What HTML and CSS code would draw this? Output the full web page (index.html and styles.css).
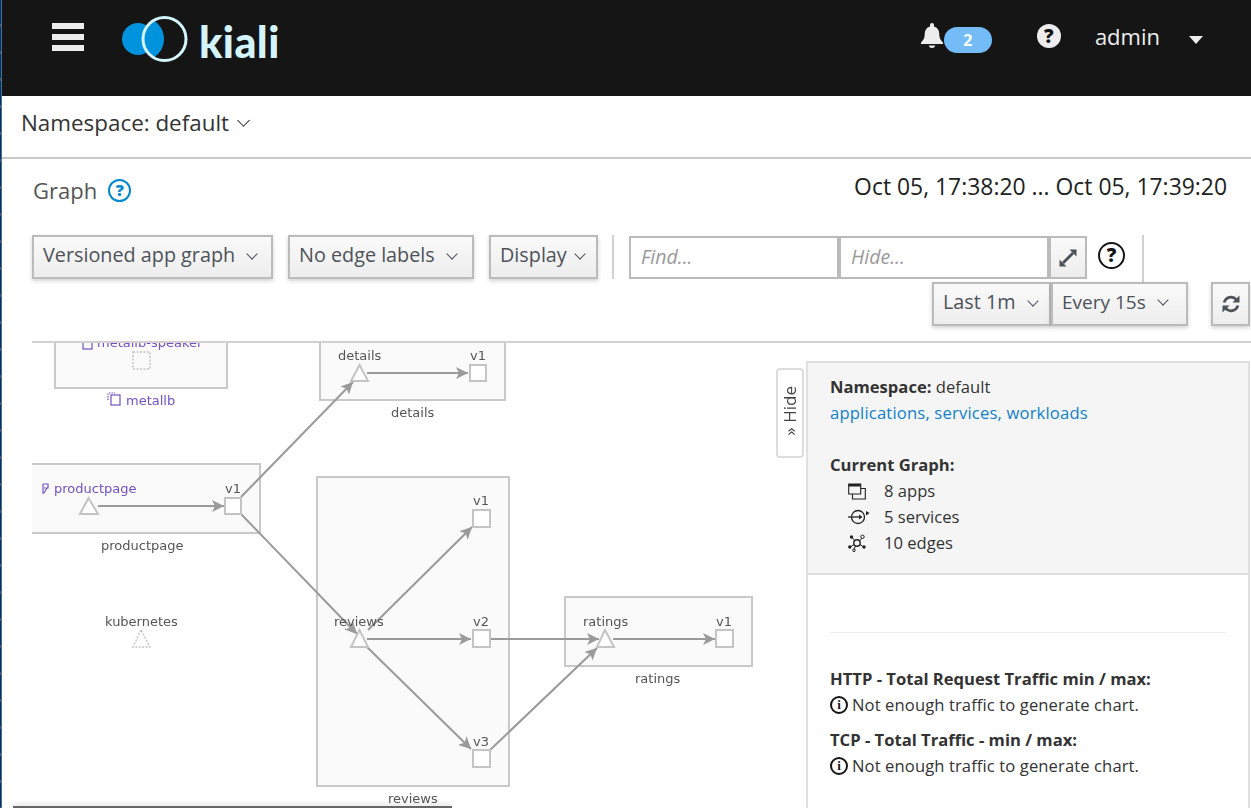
FILE: index.html
```html
<!DOCTYPE html>
<html lang="en">
<head>
  <meta charset="UTF-8" />
  <meta name="viewport" content="width=device-width, initial-scale=1.0"/>
  <title>Kiali</title>
  <link rel="stylesheet" href="styles.css">
</head>
<body>
  <div class="page">
    <header class="topbar">
      <svg class="menu-icon" width="32" height="28" viewBox="0 0 32 28">
        <rect x="0" y="0" width="32" height="6" />
        <rect x="0" y="11" width="32" height="6" />
        <rect x="0" y="22" width="32" height="6" />
      </svg>
      <svg class="logo-mark" width="68" height="46" viewBox="122 16 68 46">
        <defs>
          <clipPath id="ringClip"><circle cx="164.5" cy="39" r="22" /></clipPath>
        </defs>
        <circle cx="138" cy="39" r="16" fill="#0093dd" />
        <circle cx="142" cy="39" r="22" fill="#0093dd" clip-path="url(#ringClip)" />
        <circle cx="164.5" cy="39" r="21.5" fill="none" stroke="#d4f4fb" stroke-width="3" />
      </svg>
      <span class="logo-text">kiali</span>

      <div class="topbar-right">
        <svg class="bell" width="24" height="26" viewBox="0 0 24 26">
          <path d="M12 0a2 2 0 0 0-2 2v1.400C6.500 4.400 4.700 7.300 4.700 11c0 4.500-1.700 6.500-3.700 8.400V21h22v-1.600c-2-1.900-3.700-3.900-3.700-8.400 0-3.700-1.800-6.600-5.300-7.600V2a2 2 0 0 0-2-2z" />
          <path d="M8.700 22.500a3.400 3.400 0 0 0 6.600 0z" />
        </svg>
        <span class="badge">2</span>
        <span class="help-solid">?</span>
        <span class="user">admin</span>
        <span class="user-caret"></span>
      </div>
    </header>

    <div class="ns-bar">
      <span>Namespace: default</span>
      <span class="chevron chevron-lg"></span>
    </div>

    <div class="title-row">
      <div class="title">
        <span>Graph</span>
        <span class="help-blue">?</span>
      </div>
      <div class="range">Oct 05, 17:38:20 ... Oct 05, 17:39:20</div>
    </div>

    <div class="toolbar">
      <div class="toolbar-row">
        <button class="btn btn-graph">Versioned app graph <span class="chevron"></span></button>
        <button class="btn btn-edge">No edge labels <span class="chevron"></span></button>
        <button class="btn btn-display">Display <span class="chevron"></span></button>
        <div class="divider"></div>
        <div class="find-group">
          <input class="find-input" type="text" placeholder="Find..." />
          <input class="find-input" type="text" placeholder="Hide..." />
          <button class="btn btn-expand">
            <svg width="20" height="20" viewBox="0 0 20 20">
              <path d="M5 15 15 5" stroke="#4d5258" stroke-width="2.800" fill="none" />
              <path d="M11.500 1.500h7v7zM1.500 11.500v7h7z" fill="#4d5258" />
            </svg>
          </button>
        </div>
        <span class="help-ring">?</span>
        <div class="divider divider-tall"></div>
      </div>
      <div class="toolbar-row toolbar-row-end">
        <button class="btn btn-last">Last 1m <span class="chevron"></span></button>
        <button class="btn btn-every">Every 15s <span class="chevron"></span></button>
        <button class="btn btn-refresh">
          <svg width="20" height="20" viewBox="0 0 20 20">
            <path d="M3.200 8.500A7 7 0 0 1 15.300 5.600" stroke="#4d5258" stroke-width="2.800" fill="none" />
            <path d="M18.500 1.500v7h-7z" fill="#4d5258" />
            <path d="M16.800 11.500A7 7 0 0 1 4.700 14.400" stroke="#4d5258" stroke-width="2.800" fill="none" />
            <path d="M1.500 18.500v-7h7z" fill="#4d5258" />
          </svg>
        </button>
      </div>
    </div>

    <div class="graph-area">
      <svg class="graph" width="774" height="465" viewBox="32 343 774 465">
        <defs>
          <marker id="vee" markerWidth="14" markerHeight="12" refX="12" refY="6" orient="auto" markerUnits="userSpaceOnUse">
            <path d="M0 0 12 6 0 12 3 6z" fill="#9a9a9a" />
          </marker>
        </defs>

        <g class="boxes">
          <rect x="55" y="320" width="172" height="68" />
          <rect x="320" y="330" width="185" height="70" />
          <rect x="10" y="464" width="250" height="69" />
          <rect x="317" y="477" width="192" height="309" />
          <rect x="565" y="597" width="187" height="69" />
        </g>

        <g class="edges">
          <line x1="98" y1="506" x2="224" y2="506" marker-end="url(#vee)" />
          <line x1="241" y1="497" x2="353" y2="382" marker-end="url(#vee)" />
          <line x1="241" y1="514" x2="357" y2="634" marker-end="url(#vee)" />
          <line x1="367" y1="373" x2="468" y2="373" marker-end="url(#vee)" />
          <line x1="368" y1="630" x2="472" y2="527" marker-end="url(#vee)" />
          <line x1="367" y1="639" x2="471" y2="639" marker-end="url(#vee)" />
          <line x1="367" y1="647" x2="471" y2="749" marker-end="url(#vee)" />
          <line x1="490" y1="639" x2="599" y2="639" marker-end="url(#vee)" />
          <line x1="490" y1="750" x2="597" y2="648" marker-end="url(#vee)" />
          <line x1="613" y1="639" x2="715" y2="639" marker-end="url(#vee)" />
        </g>

        <g class="nodes">
          <rect class="dotted" x="133" y="352" width="17" height="17" />
          <polygon class="dotted" points="141,630 133,647 150,647" />
          <polygon points="88.500,498 80,514 98,514" />
          <rect x="225" y="498" width="16" height="16" />
          <polygon points="359.500,365 351,381 368,381" />
          <rect x="470" y="365" width="16" height="16" />
          <rect x="473" y="510" width="17" height="17" />
          <polygon points="359.500,630 351,647 368,647" />
          <rect x="473" y="630" width="17" height="17" />
          <rect x="473" y="750" width="17" height="17" />
          <polygon points="605,630 597,647 614,647" />
          <rect x="716" y="630" width="17" height="17" />
        </g>

        <g class="labels">
          <text class="purple" x="97" y="347">metallb-speaker</text>
          <text class="purple" x="126" y="405">metallb</text>
          <text class="purple" x="54" y="493">productpage</text>
          <text x="225" y="493">v1</text>
          <text x="101" y="550">productpage</text>
          <text x="338" y="360">details</text>
          <text x="470" y="360">v1</text>
          <text x="391" y="417">details</text>
          <text x="473" y="505">v1</text>
          <text x="334" y="626">reviews</text>
          <text x="473" y="626">v2</text>
          <text x="473" y="746">v3</text>
          <text x="388" y="803">reviews</text>
          <text x="583" y="626">ratings</text>
          <text x="716" y="626">v1</text>
          <text x="635" y="683">ratings</text>
          <text x="105" y="626">kubernetes</text>
        </g>

        <g class="purple-icons">
          <rect x="111" y="395" width="9" height="10" />
          <path d="M108 400v-6h1.500M109 393h6" stroke-dasharray="1.500 1" />
          <rect x="83" y="339" width="9" height="10" />
          <path d="M43 484v10M43 484h5v4h-4M47 488l-3 5" />
        </g>
      </svg>

      <aside class="side">
        <button class="hide-tab"><span class="hide-text">» Hide</span></button>
        <div class="panel">
          <div class="panel-top">
            <div><b>Namespace:</b> default</div>
            <div class="links">applications, services, workloads</div>
            <div class="spacer"></div>
            <div><b>Current Graph:</b></div>
            <div class="stat">
              <svg width="18" height="18" viewBox="0 0 18 18">
                <path d="M.700 2h12v10H.700z" fill="none" stroke="#222" stroke-width="1.100" />
                <path d="M.700 2h12v2.500H.700z" fill="#222" />
                <path d="M12.700 6.500h4.600v10.500H4.500v-5" fill="none" stroke="#222" stroke-width="1.100" />
              </svg>
              <span>8 apps</span>
            </div>
            <div class="stat">
              <svg class="stat-wide" width="22" height="18" viewBox="0 0 22 18">
                <circle cx="10" cy="9" r="6.500" fill="none" stroke="#222" stroke-width="1.300" />
                <path d="M0 9h12" stroke="#222" stroke-width="1.300" />
                <path d="M11 6.500 14.500 9 11 11.500zM18 3l3.500 2-3.500 2.500z" fill="#222" />
              </svg>
              <span>5 services</span>
            </div>
            <div class="stat">
              <svg width="18" height="18" viewBox="0 0 18 18">
                <circle cx="9" cy="9" r="3.200" fill="none" stroke="#222" stroke-width="1.400" />
                <path d="M6.700 6.700 4 3.500M11.500 7 14 4M7.500 12 6 15.500M12 10.500l3 2M6 10.500l-3 2" stroke="#222" />
                <circle cx="3.500" cy="3" r="1.700" fill="#222" />
                <circle cx="14.500" cy="2.800" r="1.700" fill="none" stroke="#222" />
                <circle cx="1.800" cy="13" r="1.700" fill="#222" />
                <circle cx="16" cy="13" r="1.700" fill="#222" />
                <circle cx="6" cy="16.300" r="1.300" fill="none" stroke="#222" />
              </svg>
              <span>10 edges</span>
            </div>
          </div>
          <div class="panel-body">
            <hr class="rule" />
            <div><b>HTTP - Total Request Traffic min / max:</b></div>
            <div class="chart-note"><span class="info">i</span>Not enough traffic to generate chart.</div>
            <div class="chart-title-next"><b>TCP - Total Traffic - min / max:</b></div>
            <div class="chart-note"><span class="info">i</span>Not enough traffic to generate chart.</div>
          </div>
        </div>
      </aside>
    </div>
  </div>
  <div class="window-edge"></div>
</body>
</html>
```

FILE: styles.css
```css
html, body {
  margin: 0;
  height: 100%;
  overflow: hidden;
}

body {
  position: relative;
  padding-left: 2px;
  box-sizing: border-box;
  font-family: 'Open Sans', sans-serif;
  color: #333;
  background:
    linear-gradient(to right, transparent 1px, #1f78c1 1px),
    repeating-linear-gradient(#2a2a2a 0 24px, #7a4a3a 24px 27px);
}

.page {
  height: 100%;
  display: flex;
  flex-direction: column;
  background-color: #fff;
}

/* top bar */
.topbar {
  height: 96px;
  flex: none;
  display: flex;
  align-items: flex-start;
  background-color: #151515;
  color: #ededed;
}

.menu-icon {
  margin: 23px 0 0 50px;
  fill: #ededed;
}

.logo-mark {
  margin: 16px 0 0 38px;
}

.logo-text {
  margin: 14px 0 0 9px;
  font-family: 'Lato', sans-serif;
  font-weight: 900;
  font-size: 43px;
  line-height: 56px;
  letter-spacing: 0.4px;
  color: #d4f4fb;
}

.topbar-right {
  margin-left: auto;
  display: flex;
  align-items: flex-start;
}

.bell {
  margin-top: 23px;
  fill: #ededed;
}

.badge {
  width: 48px;
  height: 26px;
  margin-top: 27px;
  border-radius: 13px;
  background-color: #73bcf7;
  color: #fff;
  font-weight: 700;
  font-size: 16px;
  line-height: 26px;
  text-align: center;
}

.help-solid {
  width: 24px;
  height: 24px;
  margin: 24px 0 0 45px;
  border-radius: 50%;
  background-color: #ededed;
  color: #151515;
  font-weight: 800;
  font-size: 19px;
  line-height: 24px;
  text-align: center;
}

.user {
  margin: 19px 0 0 34px;
  font-size: 22px;
  line-height: 34px;
}

.user-caret {
  margin: 36px 48px 0 29px;
  border-left: 7px solid transparent;
  border-right: 7px solid transparent;
  border-top: 8px solid #ededed;
}

/* namespace bar */
.ns-bar {
  flex: none;
  display: flex;
  align-items: center;
  gap: 11px;
  height: 53px;
  padding: 0 0 8px 19px;
  border-bottom: 2px solid #c9c9c9;
  font-size: 22.400px;
  color: #333;
}

.chevron {
  display: inline-block;
  width: 7px;
  height: 7px;
  margin: 0 3px 6px 8px;
  border-right: 1.500px solid #4d5258;
  border-bottom: 1.500px solid #4d5258;
  transform: rotate(45deg);
  vertical-align: middle;
}

.chevron-lg {
  margin: 0 0 4px -1px;
  width: 8px;
  height: 8px;
  border-color: #333;
}

/* title and time range */
.title-row {
  height: 76px;
  flex: none;
  display: flex;
  justify-content: space-between;
  padding: 0 24px 0 31px;
  box-sizing: border-box;
}

.title {
  display: flex;
  align-items: center;
  gap: 11px;
  height: 28px;
  margin-top: 17px;
  font-size: 22px;
  color: #555;
}

.help-blue {
  width: 19px;
  height: 19px;
  border: 2.500px solid #0088ce;
  border-radius: 50%;
  color: #0088ce;
  font-weight: 800;
  font-size: 16px;
  line-height: 19px;
  text-align: center;
}

.range {
  margin-top: 14px;
  font-size: 22.900px;
  line-height: 28px;
  color: #222;
}

/* toolbar */
.toolbar {
  flex: none;
  padding-left: 30px;
  height: 106px;
}

.toolbar-row {
  display: flex;
  align-items: flex-start;
  height: 47px;
}

.toolbar-row-end {
  justify-content: flex-end;
}

.btn {
  height: 44px;
  padding: 0 0 5px 9px;
  border: 2px solid #bbb;
  background: linear-gradient(#fafafa, #ededed);
  box-shadow: 0 2px 4px rgba(0,0,0,0.18);
  font-family: inherit;
  font-size: 19.800px;
  color: #4d5258;
  text-align: left;
  white-space: nowrap;
}

.btn-graph { width: 241px; }
.btn-edge { width: 186px; margin-left: 15px; }
.btn-display { width: 109px; margin-left: 15px; }
.btn-last { width: 119px; }
.btn-every { width: 137px; }
.btn-refresh { width: 39px; margin: 0 1px 0 23px; }

.btn-display .chevron {
  margin-left: 4px;
}

.btn-every {
  font-size: 19px;
}

.btn-expand,
.btn-refresh {
  padding: 0;
}

.btn svg {
  display: block;
  margin: 0 auto;
}

.divider {
  width: 2px;
  height: 44px;
  margin: 0 15px 0 14px;
  background-color: #d1d1d1;
}

.divider-tall {
  height: 47px;
  margin: 0;
}

.find-group {
  display: flex;
  height: 43px;
  margin-top: 1px;
}

.find-input {
  width: 210px;
  height: 43px;
  padding: 0 10px 2px;
  border: 2px solid #bbb;
  box-sizing: border-box;
  font-family: inherit;
  font-size: 19.500px;
  font-style: italic;
  outline: none;
}

.find-input::placeholder {
  color: #999;
}

.btn-expand {
  width: 38px;
  height: 43px;
  box-shadow: none;
}

.help-ring {
  width: 23px;
  height: 23px;
  margin: 7px 17px 0 11px;
  border: 2.500px solid #151515;
  border-radius: 50%;
  color: #151515;
  font-weight: 800;
  font-size: 19px;
  line-height: 23px;
  text-align: center;
}

/* graph and side panel */
.graph-area {
  flex: 1;
  min-height: 0;
  display: flex;
  margin-left: 30px;
  border-top: 2px solid #d1d1d1;
}

.graph {
  flex: none;
  filter: blur(0.45px);
}

.boxes rect {
  fill: #fafafa;
  stroke: #c9c9c9;
  stroke-width: 2;
}

.edges line {
  stroke: #9a9a9a;
  stroke-width: 2;
}

.nodes rect,
.nodes polygon {
  fill: #fff;
  stroke: #c4c4c4;
  stroke-width: 2;
}

.nodes .dotted {
  fill: none;
  stroke-width: 1.500;
  stroke-dasharray: 2 1.500;
}

.labels text {
  font-family: 'DejaVu Sans', sans-serif;
  font-size: 13px;
  fill: #555;
}

.labels .purple {
  fill: #6f52c4;
}

.purple-icons rect,
.purple-icons path {
  fill: none;
  stroke: #6f52c4;
  stroke-width: 1.200;
}

.side {
  position: relative;
  flex: 1;
  padding-top: 18px;
  min-width: 0;
}

.hide-tab {
  position: absolute;
  top: 25px;
  left: -30px;
  width: 28px;
  height: 90px;
  padding: 0;
  border: 2px solid #ddd;
  border-radius: 4px;
  background-color: #fff;
  font-family: inherit;
}

.hide-text {
  display: inline-block;
  writing-mode: vertical-rl;
  transform: rotate(180deg);
  white-space: nowrap;
  font-size: 17px;
  line-height: 24px;
  color: #444;
}

.panel {
  height: 100%;
  margin-right: 1px;
  border: 2px solid #e0e0e0;
  border-bottom: none;
  font-size: 16.600px;
  line-height: 26px;
}

.panel-top {
  height: 199px;
  padding: 11px 22px 0;
  background-color: #f5f5f5;
  border-bottom: 2px solid #e0e0e0;
}

.panel b {
  font-weight: 700;
}

.links {
  color: #0f82c9;
  letter-spacing: 0.18px;
}

.spacer {
  height: 26px;
}

.stat {
  display: flex;
  align-items: center;
  padding-left: 18px;
}

.stat svg {
  flex: none;
  margin-right: 18px;
}

.stat .stat-wide {
  margin-right: 14px;
}

.panel-body {
  padding: 57px 22px 0;
}

.rule {
  margin: 0 0 33px;
  border: none;
  border-top: 1px solid #eee;
}

.chart-title-next {
  margin-top: 9px;
}

.chart-note {
  display: flex;
  align-items: center;
  letter-spacing: 0.1px;
}

.info {
  width: 14px;
  height: 14px;
  margin-right: 4px;
  border: 2px solid #151515;
  border-radius: 50%;
  font-family: 'Liberation Serif', serif;
  font-weight: 700;
  font-size: 13px;
  line-height: 14px;
  text-align: center;
  color: #151515;
}

.window-edge {
  position: absolute;
  left: 13px;
  bottom: 0;
  width: 439px;
  height: 2px;
  background-color: #666;
  box-shadow: 0 -2px 5px rgba(0,0,0,0.2);
}
```
